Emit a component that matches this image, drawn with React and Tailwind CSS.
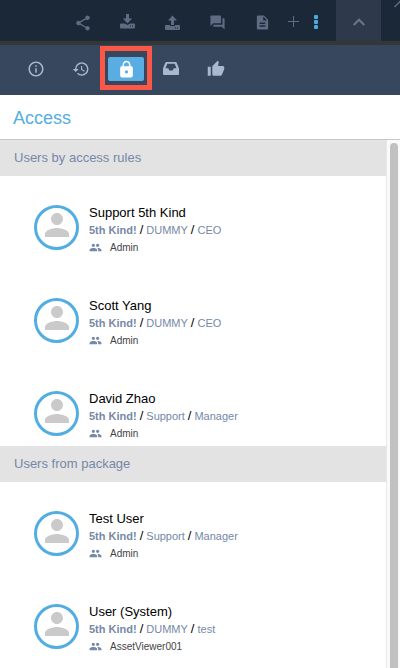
import React from "react";
import {
  MdShare,
  MdForum,
  MdDescription,
  MdInfoOutline,
  MdHistory,
  MdLock,
  MdThumbUp,
  MdPerson,
  MdPeople,
} from "react-icons/md";

function TransferIcon({ up }) {
  return (
    <svg width="17" height="17" viewBox="0 0 17 17" fill="currentColor" aria-hidden="true">
      {up ? (
        <path d="M8.5 1.500 13 6.500H10V11H7V6.500H4z" />
      ) : (
        <path d="M7 0h3v4.500h3.200L8.500 9.500 3.800 4.500H7z" />
      )}
      <path
        fillRule="evenodd"
        d={
          up
            ? "M2 11h4v1h5v-1h4q1 0 1 1v3q0 1-1 1H2q-1 0-1-1v-3q0-1 1-1zM11 13.500v1h1v-1zM13 13.500v1h1v-1z"
            : "M2 9.500h3.800l2.700 1.500 2.700-1.500H15q1 0 1 1v3q0 1-1 1H2q-1 0-1-1v-3q0-1 1-1zM11 11.500v1h1v-1zM13 11.500v1h1v-1z"
        }
      />
    </svg>
  );
}

function InboxIcon() {
  return (
    <svg width="16" height="13" viewBox="0 0 16 13" className="mb-px" aria-hidden="true">
      <path
        fill="currentColor"
        fillRule="evenodd"
        d="M3.600 0h8.800q1 0 1.300.8L16 6.500V12q0 1-1 1H1q-1 0-1-1V6.500L2.300.8Q2.600 0 3.600 0zM4.300 1.700 2.500 6.300h2.700l1.200 2.200h3.200l1.200-2.200h2.700L11.700 1.700z"
      />
    </svg>
  );
}

const actions = [
  { label: "Share", icon: <MdShare size={18} /> },
  { label: "Download", icon: <TransferIcon /> },
  { label: "Upload", icon: <TransferIcon up /> },
  { label: "Comments", icon: <MdForum size={17} /> },
  { label: "Document", icon: <MdDescription size={17} /> },
];

const tabs = [
  { label: "Info", icon: <MdInfoOutline size={18} /> },
  { label: "History", icon: <MdHistory size={18} /> },
  { label: "Access", icon: <MdLock size={19} />, active: true },
  { label: "Inbox", icon: <InboxIcon /> },
  { label: "Approve", icon: <MdThumbUp size={18} /> },
];

const sections = [
  {
    title: "Users by access rules",
    users: [
      { name: "Support 5th Kind", dept: "DUMMY", role: "CEO", group: "Admin" },
      { name: "Scott Yang", dept: "DUMMY", role: "CEO", group: "Admin" },
      { name: "David Zhao", dept: "Support", role: "Manager", group: "Admin" },
    ],
  },
  {
    title: "Users from package",
    users: [
      { name: "Test User", dept: "Support", role: "Manager", group: "Admin" },
      { name: "User (System)", dept: "DUMMY", role: "test", group: "AssetViewer001" },
    ],
  },
];

function TopBar() {
  return (
    <div className="flex h-[45px] shrink-0 border-b-4 border-[#363636] bg-[#1b2838] pl-[60px] text-[#5d6c82]">
      {actions.map((a) => (
        <button key={a.label} aria-label={a.label} className="flex w-[45px] items-center justify-center pt-1">
          {a.icon}
        </button>
      ))}
      <button aria-label="Add" className="flex w-4 items-center justify-center pt-[2px]">
        <svg width="11" height="11" viewBox="0 0 11 11" fill="currentColor" aria-hidden="true">
          <path d="M5 0h1v5h5v1H6v5H5V6H0V5h5z" />
        </svg>
      </button>
      <button aria-label="More" className="ml-[7px] flex w-4 items-center justify-center pt-[2px] text-[#4ea9de]">
        <svg width="4" height="14" viewBox="0 0 4 14" fill="currentColor" aria-hidden="true">
          <rect width="4" height="4" rx="1" />
          <rect y="5" width="4" height="4" rx="1" />
          <rect y="10" width="4" height="4" rx="1" />
        </svg>
      </button>
      <button aria-label="Collapse" className="ml-3 flex w-[45px] items-center justify-center bg-[#2e394b] pt-[3px] text-[#68778d]">
        <svg width="12" height="8" viewBox="0 0 12 8" fill="none" stroke="currentColor" strokeWidth="2" aria-hidden="true">
          <path d="M.7 7 6 1.700 11.300 7" />
        </svg>
      </button>
      <button aria-label="Next" className="ml-auto flex items-start">
        <svg width="6" height="8" viewBox="0 0 6 8" fill="none" stroke="currentColor" strokeWidth="1.500" aria-hidden="true">
          <path d="M.5 7 7 .5" />
        </svg>
      </button>
    </div>
  );
}

function Tabs() {
  return (
    <nav className="flex h-[50px] shrink-0 items-center gap-[9px] bg-[#37475d] pl-[18px] pb-[2px] text-[#a9b8cc]">
      {tabs.map((t) => (
        <button
          key={t.label}
          aria-label={t.label}
          className={
            t.active
              ? "relative flex h-6 w-9 items-center justify-center rounded-[2px] bg-[#5aade2] text-white"
              : "flex h-6 w-9 items-center justify-center"
          }
        >
          {t.icon}
          {t.active && <span className="absolute -inset-x-2 -top-[11px] -bottom-[9px] border-[5px] border-[#fd5748]" />}
        </button>
      ))}
    </nav>
  );
}

function User({ user }) {
  return (
    <li className="flex gap-[10px]">
      <div className="flex size-[45px] shrink-0 items-center justify-center rounded-full border-[3px] border-[#52aee2] text-[#cacaca]">
        <MdPerson size={36} className="mb-[6px] shrink-0" />
      </div>
      <div>
        <div className="text-[13px] leading-4 text-black">{user.name}</div>
        <div className="flex items-center gap-[3px] text-[11px] leading-[18px] text-[#7688a8]">
          <span className="font-bold">5th Kind!</span>
          <span className="text-[13px] text-black">/</span>
          <span>{user.dept}</span>
          <span className="text-[13px] text-black">/</span>
          <span>{user.role}</span>
        </div>
        <div className="flex items-center gap-2 text-[10px] leading-[17px] text-[#444444]">
          <MdPeople size={13} className="text-[#7688a8]" />
          {user.group}
        </div>
      </div>
    </li>
  );
}

export default function App() {
  return (
    <div className="flex h-screen flex-col overflow-hidden bg-white font-['Liberation_Sans',Arial,sans-serif]">
      <TopBar />
      <Tabs />
      <h1 className="h-[45px] shrink-0 border-b border-[#c8c8c8] px-[13px] text-[18px] leading-[46px] text-[#54aee0]">
        Access
      </h1>
      <div className="flex min-h-0 flex-1">
        <main className="min-w-0 flex-1 overflow-hidden">
          {sections.map((s) => (
            <section key={s.title}>
              <h2 className="bg-[#e3e3e3] px-[14px] text-[13px] leading-9 text-[#7688a8]">{s.title}</h2>
              <ul className="flex flex-col gap-[42px] px-[34px] pt-[29px] pb-1">
                {s.users.map((u) => (
                  <User key={u.name} user={u} />
                ))}
              </ul>
            </section>
          ))}
        </main>
        <div className="flex w-[14px] shrink-0 border-l border-[#e8e8e8] bg-[#fafafa] pt-[3px] pl-[3px]">
          <div className="w-2 rounded-t-full bg-[#c1c1c1]" />
        </div>
      </div>
    </div>
  );
}
